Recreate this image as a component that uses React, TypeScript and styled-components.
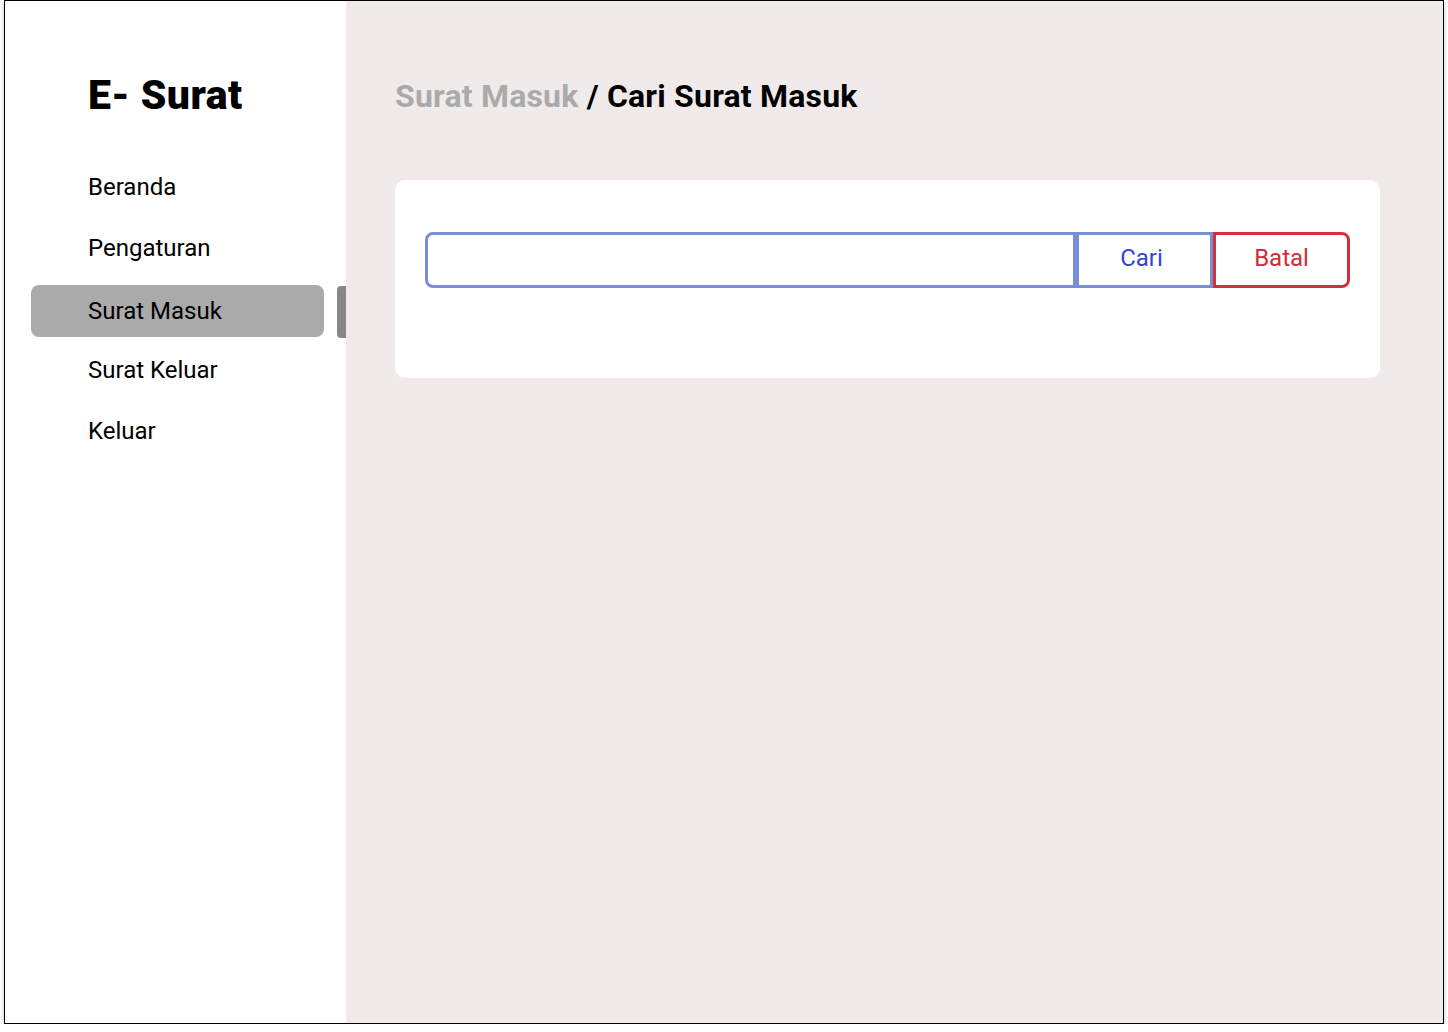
import { FC } from "react";
import styled, { createGlobalStyle } from "styled-components";

const GlobalStyle = createGlobalStyle`
  html, body {
    margin: 0;
    padding: 0;
    background: #ffffff;
  }
  * {
    box-sizing: border-box;
  }
`;

const Frame = styled.div`
  display: flex;
  width: 1440px;
  height: 1024px;
  margin-left: 4px;
  border: 1.5px solid #000;
  box-shadow: 0 4px 4px rgba(0, 0, 0, 0.25);
  font-family: Roboto, "Liberation Sans", sans-serif;
  overflow: hidden;
`;

const Sidebar = styled.aside`
  width: 341px;
  flex-shrink: 0;
  background: #ffffff;
  display: flex;
  flex-direction: column;
  padding-top: 70px;
`;

const Logo = styled.h1`
  margin: 0 0 0 83px;
  font-family: Roboto, "Liberation Sans", sans-serif;
  font-weight: 900;
  font-size: 41px;
  line-height: 48px;
  color: #000;
  letter-spacing: 0.4px;
`;

const NavList = styled.nav`
  display: flex;
  flex-direction: column;
  gap: 9px;
  margin-top: 42px;
`;

const NavRow = styled.div<{ $active?: boolean }>`
  display: flex;
  align-items: center;
  justify-content: space-between;
  height: 52px;
  margin-top: ${(p) => (p.$active ? "2px" : "0")};
  margin-bottom: ${(p) => (p.$active ? "-2px" : "0")};
`;

const NavItem = styled.a<{ $active?: boolean }>`
  display: flex;
  align-items: center;
  width: 293px;
  height: 52px;
  margin-left: 26px;
  padding-left: 57px;
  border-radius: 8px;
  background: ${(p) => (p.$active ? "#aaaaaa" : "transparent")};
  color: #000;
  font-size: 24px;
  text-decoration: none;
  cursor: pointer;
`;

const Indicator = styled.span`
  width: 9px;
  height: 52px;
  margin-top: 2px;
  background: #878787;
  border-radius: 4px 0 0 4px;
`;

const Main = styled.main`
  flex: 1;
  background: #f0eaea;
  padding: 74px 63px 0 49px;
`;

const Breadcrumb = styled.div`
  font-size: 32px;
  font-weight: 700;
  line-height: 42px;
  letter-spacing: 0.2px;
  color: #000;
`;

const Crumb = styled.span`
  color: #aaaaaa;
`;

const Card = styled.section`
  margin-top: 63px;
  background: #ffffff;
  border-radius: 10px;
  height: 198px;
  padding: 52px 30px 0;
`;

const SearchRow = styled.div`
  display: flex;
  height: 56px;
`;

const SearchInput = styled.input`
  flex: 1;
  height: 56px;
  border: 3px solid #7a8ed6;
  border-radius: 8px 0 0 8px;
  outline: none;
  font-size: 20px;
  padding: 0 14px;
  font-family: inherit;
`;

const Button = styled.button<{ $tone: "blue" | "red" }>`
  width: 137px;
  height: 56px;
  background: #ffffff;
  border: 3px solid ${(p) => (p.$tone === "blue" ? "#7a8ed6" : "#d0313d")};
  border-radius: ${(p) => (p.$tone === "red" ? "0 8px 8px 0" : "0")};
  color: ${(p) => (p.$tone === "blue" ? "#3347d1" : "#cf2e3b")};
  font-family: Roboto, "Liberation Sans", sans-serif;
  font-size: 24px;
  padding: 0 ${(p) => (p.$tone === "blue" ? "6px" : "0")} 4px 0;
  cursor: pointer;
`;

const items = ["Beranda", "Pengaturan", "Surat Masuk", "Surat Keluar", "Keluar"];

const App: FC = () => {
  return (
    <>
      <GlobalStyle />
      <Frame>
        <Sidebar>
          <Logo>E- Surat</Logo>
          <NavList>
            {items.map((label) => {
              const active = label === "Surat Masuk";
              return (
                <NavRow key={label} $active={active}>
                  <NavItem $active={active}>{label}</NavItem>
                  {active && <Indicator />}
                </NavRow>
              );
            })}
          </NavList>
        </Sidebar>
        <Main>
          <Breadcrumb>
            <Crumb>Surat Masuk</Crumb> / Cari Surat Masuk
          </Breadcrumb>
          <Card>
            <SearchRow>
              <SearchInput type="text" />
              <Button $tone="blue">Cari</Button>
              <Button $tone="red">Batal</Button>
            </SearchRow>
          </Card>
        </Main>
      </Frame>
    </>
  );
};

export default App;
